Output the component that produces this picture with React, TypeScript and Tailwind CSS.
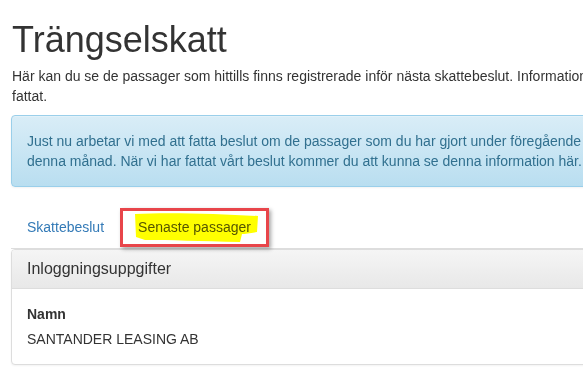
import React from "react";

export default function App() {
  return (
    <div className="w-[583px] h-[369px] overflow-hidden bg-white font-['Liberation_Sans',Arial,sans-serif] text-[14px] leading-[20px] text-[#333]">
      <div className="ml-[11px] w-[900px]">
        <h1 className="mt-[20px] ml-[1px] text-[36px] leading-[40px] font-normal text-[#333]">
          Trängselskatt
        </h1>
        <p className="mt-[6px] ml-[1px] whitespace-nowrap">
          Här kan du se de passager som hittills finns registrerade inför nästa skattebeslut. Information om passagerna visas tills beslut har
          <br />
          fattat.
        </p>
        <div className="mt-[9px] rounded-[4px] border border-[#9acfea] bg-[linear-gradient(to_bottom,#d9edf7,#b9def0)] p-[15px] text-[#31708f] whitespace-nowrap shadow-[inset_0_1px_0_rgba(255,255,255,0.25),0_1px_2px_rgba(0,0,0,0.05)]">
          Just nu arbetar vi med att fatta beslut om de passager som du har gjort under föregående månad och
          <br />
          denna månad. När vi har fattat vårt beslut kommer du att kunna se denna information här.
        </div>
        <div className="relative mt-[20px] h-[42px] border-b border-[#ddd]">
          <ul className="flex pl-[1px]">
            <li className="mr-[4px]">
              <a className="block px-[15px] py-[10px] text-[#337ab7]">Skattebeslut</a>
            </li>
            <li>
              <a className="relative block px-[15px] py-[10px] text-[#555]">
                <svg
                  className="absolute left-[10px] top-[3px] mix-blend-multiply"
                  width="128"
                  height="34"
                  viewBox="0 0 128 34"
                >
                  <path
                    d="M2,4 C37,2 87,4 125,6 L124,22 C117,23 112,24 109,24 L107,32 C67,31 37,30 12,30 L3,27 Z"
                    fill="#ffff00"
                  />
                </svg>
                <span className="relative mix-blend-multiply">Senaste passager</span>
              </a>
            </li>
          </ul>
          <div className="absolute left-[109px] top-[1px] w-[149px] h-[39px] border-[3px] border-[#e8454a] shadow-[2px_2px_4px_rgba(0,0,0,0.35)]" />
        </div>
        <div className="rounded-[4px] border border-[#ddd] bg-white shadow-[0_1px_2px_rgba(0,0,0,0.05)]">
          <div className="rounded-t-[3px] border-b border-[#ddd] bg-[linear-gradient(to_bottom,#f5f5f5,#e8e8e8)] px-[15px] py-[10px] text-[16px] leading-[18px] text-[#333]">
            Inloggningsuppgifter
          </div>
          <div className="p-[15px]">
            <div className="mb-[5px] font-bold">Namn</div>
            <div>SANTANDER LEASING AB</div>
          </div>
        </div>
      </div>
    </div>
  );
}
